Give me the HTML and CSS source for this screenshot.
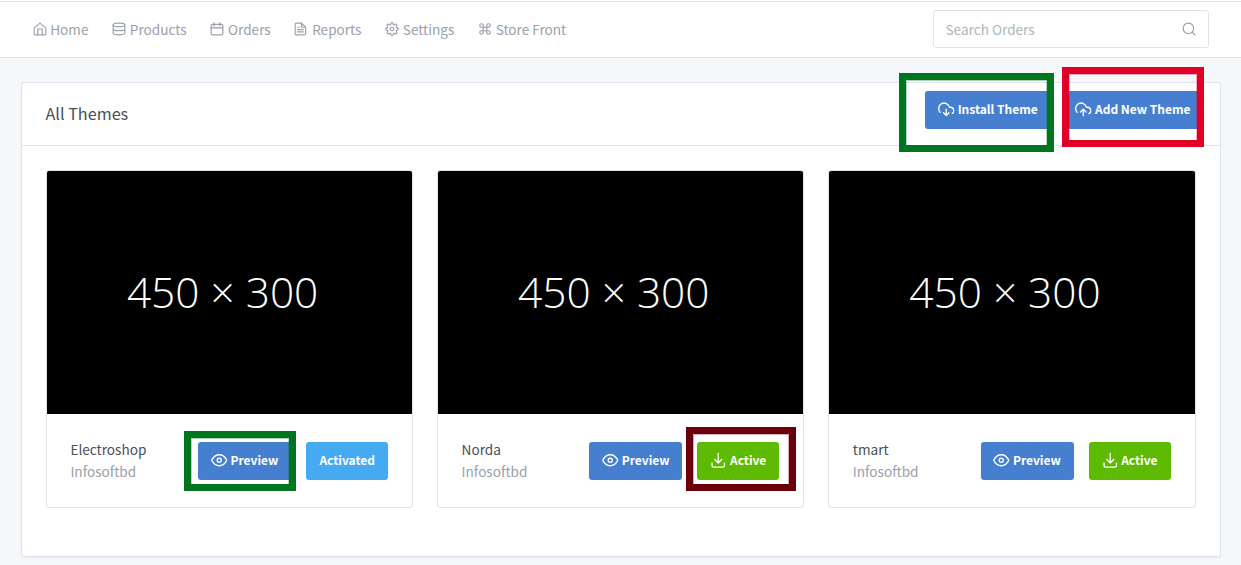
FILE: index.html
```html
<!DOCTYPE html>
<html lang="en">
<head>
<meta charset="utf-8">
<title>All Themes</title>
<link rel="stylesheet" href="styles.css">
</head>
<body>
<svg class="sprite" aria-hidden="true">
  <symbol id="home" viewBox="0 0 24 24"><path d="M2 10.500 12 2l10 8.500V20a2 2 0 0 1-2 2H4a2 2 0 0 1-2-2zM8 22V12h8v10"/></symbol>
  <symbol id="database" viewBox="0 0 24 24"><ellipse cx="12" cy="5" rx="10" ry="3"/><path d="M22 12c0 1.660-4 3-10 3s-10-1.340-10-3M2 5v14c0 1.660 4 3 10 3s10-1.340 10-3V5"/></symbol>
  <symbol id="calendar" viewBox="0 0 24 24"><rect x="2" y="4" width="20" height="18" rx="2"/><path d="M17 1v6M7 1v6M2 10h20"/></symbol>
  <symbol id="file" viewBox="0 0 24 24"><path d="M13 2H4a2 2 0 0 0-2 2v16a2 2 0 0 0 2 2h14a2 2 0 0 0 2-2V9zM13 2v7h7M16 13H6M16 17H6M9 9H6"/></symbol>
  <symbol id="settings" viewBox="0 0 24 24"><circle cx="12" cy="12" r="3"/><path d="M19.400 15a1.650 1.650 0 0 0 .33 1.820l.06.06a2 2 0 1 1-2.830 2.830l-.06-.06a1.650 1.650 0 0 0-2.800 1.170V21a2 2 0 0 1-4 0v-.09a1.650 1.650 0 0 0-2.900-1.180l-.06.06a2 2 0 1 1-2.830-2.830l.06-.06A1.650 1.650 0 0 0 3.090 14H3a2 2 0 0 1 0-4h.09a1.650 1.650 0 0 0 1.180-2.900l-.06-.06a2 2 0 1 1 2.830-2.830l.06.06A1.650 1.650 0 0 0 10 3.090V3a2 2 0 0 1 4 0v.09a1.650 1.650 0 0 0 2.900 1.180l.06-.06a2 2 0 1 1 2.830 2.830l-.06.06A1.650 1.650 0 0 0 20.910 10H21a2 2 0 0 1 0 4h-.09a1.650 1.650 0 0 0-1.510 1z"/></symbol>
  <symbol id="command" viewBox="0 0 24 24"><path d="M18 3a3 3 0 0 0-3 3v12a3 3 0 1 0 3-3H6a3 3 0 1 0 3 3V6a3 3 0 1 0-3 3h12a3 3 0 0 0 0-6z"/></symbol>
  <symbol id="search" viewBox="0 0 24 24"><circle cx="11" cy="11" r="9"/><path d="m22 22-4.500-4.500"/></symbol>
  <symbol id="cloud-down" viewBox="0 0 24 24"><path d="m8 17 4 4 4-4M12 12v9M20.880 18.090A5 5 0 0 0 18 9h-1.260A8 8 0 1 0 3 16.290"/></symbol>
  <symbol id="cloud-up" viewBox="0 0 24 24"><path d="m16 16-4-4-4 4M12 12v9M20.390 18.390A5 5 0 0 0 18 9h-1.260A8 8 0 1 0 3 16.300"/></symbol>
  <symbol id="eye" viewBox="0 0 24 24"><path d="M1 12s4-8 11-8 11 8 11 8-4 8-11 8-11-8-11-8z"/><circle cx="12" cy="12" r="3"/></symbol>
  <symbol id="download" viewBox="0 0 24 24"><path d="M3 16v4a2 2 0 0 0 2 2h14a2 2 0 0 0 2-2v-4M7 11l5 5 5-5M12 2v14"/></symbol>
</svg>

<header class="topbar">
  <nav class="nav">
    <a class="nav-link"><svg class="icon"><use href="#home"/></svg><span>Home</span></a>
    <a class="nav-link"><svg class="icon"><use href="#database"/></svg><span>Products</span></a>
    <a class="nav-link"><svg class="icon"><use href="#calendar"/></svg><span>Orders</span></a>
    <a class="nav-link"><svg class="icon"><use href="#file"/></svg><span>Reports</span></a>
    <a class="nav-link"><svg class="icon"><use href="#settings"/></svg><span>Settings</span></a>
    <a class="nav-link"><svg class="icon"><use href="#command"/></svg><span>Store Front</span></a>
  </nav>
  <div class="search"><span>Search Orders</span><svg class="icon"><use href="#search"/></svg></div>
</header>

<main class="panel">
  <div class="panel-head">
    <h1>All Themes</h1>
    <div class="head-actions">
      <span class="marked"><a class="btn primary install"><svg class="icon"><use href="#cloud-down"/></svg><span>Install Theme</span></a><i class="mark mark-install"></i></span>
      <span class="marked"><a class="btn primary add"><svg class="icon"><use href="#cloud-up"/></svg><span>Add New Theme</span></a><i class="mark mark-add"></i></span>
    </div>
  </div>
  <div class="themes">
    <article class="theme">
      <div class="thumb">450 × 300</div>
      <div class="theme-foot">
        <div class="meta"><div class="name">Electroshop</div><div class="author">Infosoftbd</div></div>
        <div class="actions">
          <span class="marked"><a class="btn primary preview"><svg class="icon"><use href="#eye"/></svg><span>Preview</span></a><i class="mark mark-preview"></i></span>
          <a class="btn info"><span>Activated</span></a>
        </div>
      </div>
    </article>
    <article class="theme">
      <div class="thumb">450 × 300</div>
      <div class="theme-foot">
        <div class="meta"><div class="name">Norda</div><div class="author">Infosoftbd</div></div>
        <div class="actions">
          <a class="btn primary preview"><svg class="icon"><use href="#eye"/></svg><span>Preview</span></a>
          <span class="marked"><a class="btn success"><svg class="icon"><use href="#download"/></svg><span>Active</span></a><i class="mark mark-active"></i></span>
        </div>
      </div>
    </article>
    <article class="theme">
      <div class="thumb">450 × 300</div>
      <div class="theme-foot">
        <div class="meta"><div class="name">tmart</div><div class="author">Infosoftbd</div></div>
        <div class="actions">
          <a class="btn primary preview"><svg class="icon"><use href="#eye"/></svg><span>Preview</span></a>
          <a class="btn success"><svg class="icon"><use href="#download"/></svg><span>Active</span></a>
        </div>
      </div>
    </article>
  </div>
</main>
</body>
</html>
```
FILE: styles.css
```css
* { box-sizing: border-box; }
body {
  margin: 0;
  height: 565px;
  overflow: hidden;
  background: #f5f7fb;
  color: #495057;
  font: 13.6px/22px "Noto Sans CJK SC", "Noto Sans", sans-serif;
}
.sprite { display: none; }
.icon {
  width: 14px;
  height: 14px;
  flex: none;
  fill: none;
  stroke: currentColor;
  stroke-width: 2;
  stroke-linecap: round;
  stroke-linejoin: round;
  overflow: visible;
}
.topbar {
  display: flex;
  justify-content: space-between;
  align-items: center;
  height: 57px;
  margin-top: 1px;
  padding: 0 32px 0 32.500px;
  background: #fff;
  border: solid #dfe3ec;
  border-width: 1px 0;
  box-shadow: 0 -1px #fff;
}
.nav { display: flex; gap: 23.700px; margin-top: -2px; color: #9aa0ac; }
.nav-link { display: flex; align-items: center; gap: 3.700px; white-space: nowrap; }
.search {
  display: flex;
  align-items: center;
  justify-content: space-between;
  width: 276px;
  height: 38px;
  margin-top: -2px;
  padding: 0 12.500px 0 11.500px;
  border: 1px solid #dfe3ec;
  border-radius: 3px;
  color: #adb5bd;
}
.search .icon { color: #9aa0ac; }
.panel {
  width: 1200px;
  height: 475px;
  margin: 24px 0 0 21px;
  background: #fff;
  border: 1px solid #dfe3ec;
  border-radius: 3px;
  box-shadow: 0 1px 2px rgba(0, 0, 0, .05);
}
.panel-head {
  display: flex;
  justify-content: space-between;
  height: 63px;
  padding: 8px 17px 0 23.500px;
  border-bottom: 1px solid #dfe3ec;
}
h1 { margin: 11px 0 0; font-size: 16.200px; font-weight: 400; line-height: 22px; }
.head-actions { display: flex; gap: 12px; }
.marked { position: relative; display: block; }
.mark { position: absolute; border: 7px solid; }
.mark::after { content: ""; display: block; height: 100%; border: 1px solid currentColor; opacity: .3; }
.mark-install { left: -26px; top: -18px; width: 155px; height: 79px; color: #007520; }
.mark-add { left: -1px; top: -24px; width: 142px; height: 80px; color: #e10025; }
.mark-preview { left: -14px; top: -11px; width: 112px; height: 60px; color: #007520; }
.mark-active { left: -11px; top: -15px; width: 110px; height: 64px; color: #6b000b; }
.btn {
  display: flex;
  align-items: center;
  justify-content: center;
  gap: 3px;
  width: 82px;
  height: 38px;
  border-radius: 3px;
  color: #fff;
  font-size: 12px;
  font-weight: 700;
  white-space: nowrap;
}
.btn .icon { width: 16.500px; height: 16.500px; margin-top: -1px; }
.btn span { margin-top: -2px; }
.primary { background: #467fcf; }
.info { background: #45aaf2; }
.success { background: #5eba00; }
.install { width: 126px; }
.add { width: 140px; }
.preview { width: 93px; }
.themes {
  display: grid;
  grid-template-columns: repeat(3, 1fr);
  gap: 24px;
  padding: 24px 24.400px 24px 24px;
}
.theme {
  height: 338px;
  border: 1px solid #dfe3ec;
  border-radius: 3px;
  overflow: hidden;
}
.thumb {
  height: 243px;
  padding-right: 14px;
  background: #000;
  color: #fff;
  font: 300 42.400px/241px "Open Sans", sans-serif;
  text-align: center;
}
.theme-foot { display: flex; justify-content: space-between; padding: 28px 24px 0 23.400px; }
.meta { margin-top: -4px; }
.author { color: #9aa0ac; }
.actions { display: flex; gap: 15px; }
```
